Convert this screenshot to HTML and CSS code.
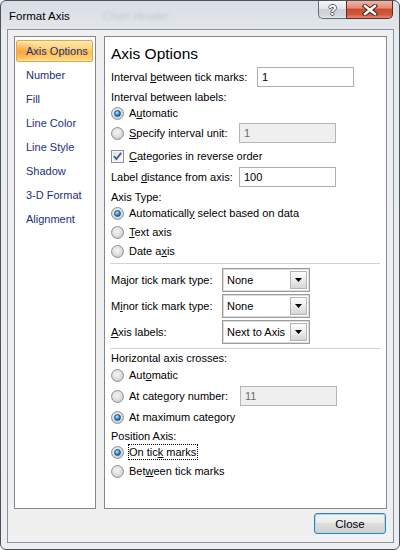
FILE: index.html
```html
<!DOCTYPE html>
<html>
<head>
<meta charset="utf-8">
<title>Format Axis</title>
<link rel="stylesheet" href="styles.css">
</head>
<body>
<div class="window">
  <div class="titlebar">
    <span class="title">Format Axis</span>
    <span class="ghost">Chart Header</span>
    <div class="caption-btns">
      <div class="cbtn help">?</div>
      <div class="cbtn close">
        <svg width="16" height="12" viewBox="0 0 16 12">
          <path d="M3 2 L13 10 M13 2 L3 10" stroke="#4b2219" stroke-width="4.4" stroke-linecap="square" fill="none"/>
          <path d="M3 2 L13 10 M13 2 L3 10" stroke="#ffffff" stroke-width="2.4" stroke-linecap="square" fill="none"/>
        </svg>
      </div>
    </div>
  </div>
  <div class="client">
    <div class="panes">
      <ul class="nav">
        <li class="selected"><span>Axis Options</span></li>
        <li><span>Number</span></li>
        <li><span>Fill</span></li>
        <li><span>Line Color</span></li>
        <li><span>Line Style</span></li>
        <li><span>Shadow</span></li>
        <li><span>3-D Format</span></li>
        <li><span>Alignment</span></li>
      </ul>
      <div class="content">
        <div class="heading">Axis Options</div>

        <div class="row h20">
          <span class="lbl w146">Interval <u>b</u>etween tick marks:</span>
          <span class="tb">1</span>
        </div>
        <div class="row h18 mt1">Interval between labels:</div>
        <div class="row h14">
          <span class="radio on"><span class="dot"></span></span>
          <span class="opt">A<u>u</u>tomatic</span>
        </div>
        <div class="row h20 mt3">
          <span class="radio"></span>
          <span class="opt w110"><u>S</u>pecify interval unit:</span>
          <span class="tb disabled">1</span>
        </div>
        <div class="row h18 mt4">
          <span class="check">
            <svg width="11" height="11" viewBox="0 0 11 11"><path d="M2 5.2 L4.4 8 L9.2 1.8" stroke="#4a5a9e" stroke-width="1.9" fill="none"/></svg>
          </span>
          <span class="opt"><u>C</u>ategories in reverse order</span>
        </div>
        <div class="row h20 mt2">
          <span class="lbl w128">Label <u>d</u>istance from axis:</span>
          <span class="tb">100</span>
        </div>
        <div class="row h18 mt1">Axis Type:</div>
        <div class="row h14">
          <span class="radio on"><span class="dot"></span></span>
          <span class="opt">Automaticall<u>y</u> select based on data</span>
        </div>
        <div class="row h18 mt3">
          <span class="radio"></span>
          <span class="opt"><u>T</u>ext axis</span>
        </div>
        <div class="row h18 mt1">
          <span class="radio"></span>
          <span class="opt">Date a<u>x</u>is</span>
        </div>

        <div class="sep sep1"></div>

        <div class="row h24 mt4">
          <span class="lbl w111">Ma<u>j</u>or tick mark type:</span>
          <span class="combo"><span class="val">None</span><span class="arrow"><svg width="7" height="4" viewBox="0 0 7 4"><path d="M0 0 H7 L3.5 4 Z" fill="#000"/></svg></span></span>
        </div>
        <div class="row h24 mt2">
          <span class="lbl w111">M<u>i</u>nor tick mark type:</span>
          <span class="combo"><span class="val">None</span><span class="arrow"><svg width="7" height="4" viewBox="0 0 7 4"><path d="M0 0 H7 L3.5 4 Z" fill="#000"/></svg></span></span>
        </div>
        <div class="row h24 mt2">
          <span class="lbl w111"><u>A</u>xis labels:</span>
          <span class="combo"><span class="val">Next to Axis</span><span class="arrow"><svg width="7" height="4" viewBox="0 0 7 4"><path d="M0 0 H7 L3.5 4 Z" fill="#000"/></svg></span></span>
        </div>

        <div class="sep sep2"></div>

        <div class="row h16 mt1">Horizontal axis crosses:</div>
        <div class="row h18">
          <span class="radio"></span>
          <span class="opt">Aut<u>o</u>matic</span>
        </div>
        <div class="row h20 mt2">
          <span class="radio"></span>
          <span class="opt w111b">At cate<u>g</u>ory number:</span>
          <span class="tb disabled">11</span>
        </div>
        <div class="row h18 mt2">
          <span class="radio on"><span class="dot"></span></span>
          <span class="opt">At maximum cate<u>g</u>ory</span>
        </div>
        <div class="row h16 mt2">Position Axis:</div>
        <div class="row h16">
          <span class="radio on"><span class="dot"></span></span>
          <span class="opt focus">On tic<u>k</u> marks</span>
        </div>
        <div class="row h18 mt2">
          <span class="radio"></span>
          <span class="opt">Bet<u>w</u>een tick marks</span>
        </div>
      </div>
    </div>
    <div class="footer">
      <button class="btn">Close</button>
    </div>
  </div>
</div>
</body>
</html>
```

FILE: styles.css
```css
html, body {
  margin: 0;
  padding: 0;
  background: #ffffff;
}

body {
  font-family: "Liberation Sans", Arial, sans-serif;
  font-size: 11px;
  color: #000;
}

.window {
  width: 400px;
  height: 550px;
  box-sizing: border-box;
  border: 1px solid #4e5257;
  border-radius: 6px;
  background: linear-gradient(to bottom, #d8dee5 0, #e2e6eb 28px, #e9ecef 29px, #eceef1 100%);
  display: flex;
  flex-direction: column;
  overflow: hidden;
}

/* ---------- title bar ---------- */
.titlebar {
  height: 28px;
  flex: none;
  display: flex;
  align-items: center;
  padding-left: 8px;
  padding-right: 6px;
}

.title {
  font-size: 11.5px;
  color: #000;
  padding-top: 2px;
}

.ghost {
  margin-left: 33px;
  padding-top: 2px;
  color: #c3c9d0;
  filter: blur(1.4px);
}

.caption-btns {
  margin-left: auto;
  align-self: flex-start;
  display: flex;
}

.cbtn {
  height: 18px;
  box-sizing: border-box;
  display: flex;
  align-items: center;
  justify-content: center;
}

.help {
  width: 28px;
  border: 1px solid #676c74;
  border-top: none;
  border-right: none;
  border-radius: 0 0 0 5px;
  background: linear-gradient(to bottom, #f3f5f7 0, #e2e6ea 45%, #cbd0d7 50%, #d3d8de 85%, #e3e6ea 100%);
  color: #fff;
  font-weight: bold;
  font-size: 14px;
  text-shadow: -1px 0 #5a5f66, 1px 0 #5a5f66, 0 -1px #5a5f66, 0 1px #5a5f66;
}

.close {
  width: 47px;
  border: 1px solid #5f2a22;
  border-top: none;
  border-radius: 0 0 5px 0;
  background: linear-gradient(to bottom, #eeb4a5 0, #e38c77 40%, #cc4b32 50%, #d1583e 80%, #e58d74 100%);
}

/* ---------- client area ---------- */
.client {
  flex: none;
  height: 514px;
  margin: 0 5px 6px 6px;
  box-sizing: border-box;
  border: 1px solid #8a939d;
  background: #f0f0f0;
  padding: 6px 6px 0 6px;
  display: flex;
  flex-direction: column;
}

.panes {
  height: 473px;
  display: flex;
  gap: 8px;
}

.nav {
  list-style: none;
  margin: 0;
  width: 82px;
  box-sizing: border-box;
  border: 1px solid #828790;
  background: #fff;
  padding: 2px 0 0 0;
}

.nav li {
  height: 24px;
  display: flex;
  align-items: center;
  padding-left: 11px;
  color: #1b2f7e;
  white-space: nowrap;
}

.nav li.selected {
  height: 22px;
  margin: 1px 2px 1px 1px;
  padding-left: 9px;
  box-sizing: border-box;
  border: 1px solid #e8a64a;
  border-radius: 2px;
  background:
    radial-gradient(ellipse 22px 10px at 4px 50%, rgba(240, 140, 40, 0.55), rgba(240, 140, 40, 0) 100%),
    linear-gradient(to bottom, #ffe9b0 0, #ffd27a 40%, #ffbf4f 55%, #ffcf6e 85%, #ffe29a 100%);
}

.content {
  width: 283px;
  box-sizing: border-box;
  border: 1px solid #828790;
  background: #fff;
  padding: 0 5px 0 6px;
  display: flex;
  flex-direction: column;
}

.heading {
  margin-top: 7px;
  height: 20px;
  margin-bottom: 3px;
  line-height: 20px;
  font-size: 15.5px;
  color: #000;
}

.row {
  display: flex;
  align-items: center;
  white-space: nowrap;
  flex: none;
}

.h14 { height: 14px; }
.h16 { height: 16px; }
.h18 { height: 18px; }
.h20 { height: 20px; }
.h24 { height: 24px; }
.mt1 { margin-top: 1px; }
.mt2 { margin-top: 2px; }
.mt3 { margin-top: 3px; }
.mt4 { margin-top: 4px; }

.lbl { flex: none; }
.w146 { width: 146px; }
.w128 { width: 128px; }
.w111 { width: 111px; }
.w110 { width: 110px; }
.w111b { width: 111px; }

.opt {
  margin-left: 5px;
}

u {
  text-decoration: underline;
  text-underline-offset: 1px;
}

/* text boxes */
.tb {
  width: 97px;
  height: 20px;
  box-sizing: border-box;
  border: 1px solid #a9afb8;
  background: #fff;
  padding-left: 4px;
  display: flex;
  align-items: center;
}

.tb.disabled {
  background: #efefef;
  border-color: #b2b6ba;
  color: #6d6d6d;
}

/* radio buttons */
.radio {
  width: 13px;
  height: 13px;
  flex: none;
  box-sizing: border-box;
  border-radius: 50%;
  border: 1px solid #8e9094;
  background: radial-gradient(circle at 45% 40%, #f4f4f4 0, #e2e2e2 45%, #c9c9c9 75%, #f6f6f6 76%, #ffffff 100%);
  display: flex;
  align-items: center;
  justify-content: center;
}

.radio .dot {
  width: 7px;
  height: 7px;
  border-radius: 50%;
  box-sizing: border-box;
  border: 1px solid #1c4f86;
  background: radial-gradient(circle at 38% 32%, #c6ecff 0, #4fb0e8 35%, #1a6bb4 70%, #0f4a86 100%);
}

/* checkbox */
.check {
  width: 13px;
  height: 13px;
  flex: none;
  box-sizing: border-box;
  border: 1px solid #8e9094;
  background: linear-gradient(135deg, #d6d8db 0, #eef0f2 50%, #ffffff 100%);
  box-shadow: inset 0 0 0 1px #f4f4f4;
  display: flex;
  align-items: center;
  justify-content: center;
}

.check svg {
  display: block;
}

/* separators */
.sep {
  height: 1px;
  background: #d3d3d3;
  margin-left: -1px;
  width: 270px;
  flex: none;
}

.sep1 { margin-top: 3px; }
.sep2 { margin-top: 4px; }

/* combo boxes */
.combo {
  width: 88px;
  height: 24px;
  box-sizing: border-box;
  border: 1px solid #9c9c9c;
  box-shadow: inset 0 0 0 1px #dcdcdc;
  background: #fff;
  display: flex;
  align-items: stretch;
}

.combo .val {
  flex: 1;
  padding-left: 4px;
  display: flex;
  align-items: center;
}

.combo .arrow {
  width: 17px;
  margin: 2px 2px 2px 0;
  box-sizing: border-box;
  border: 1px solid #b4b4b4;
  background: linear-gradient(to bottom, #fdfdfd 0, #ececec 50%, #d6d6d6 100%);
  display: flex;
  align-items: center;
  justify-content: center;
}

.combo .arrow svg {
  display: block;
}

/* focus rectangle */
.focus {
  margin-left: 4px;
  border: 1px dotted #000;
  padding: 0 1px 0 0;
  line-height: 14px;
}

/* footer */
.footer {
  margin-top: 4px;
  display: flex;
  justify-content: flex-end;
  padding-right: 1px;
}

.btn {
  width: 72px;
  height: 21px;
  box-sizing: border-box;
  border: 1px solid #3c7fb1;
  border-radius: 3px;
  background: linear-gradient(to bottom, #f4f4f4 0, #ececec 45%, #dedede 50%, #d0d0d0 100%);
  box-shadow: inset 0 0 0 1px #9fdcf6;
  font-family: "Liberation Sans", Arial, sans-serif;
  font-size: 11.5px;
  color: #000;
  padding: 0;
}
```
